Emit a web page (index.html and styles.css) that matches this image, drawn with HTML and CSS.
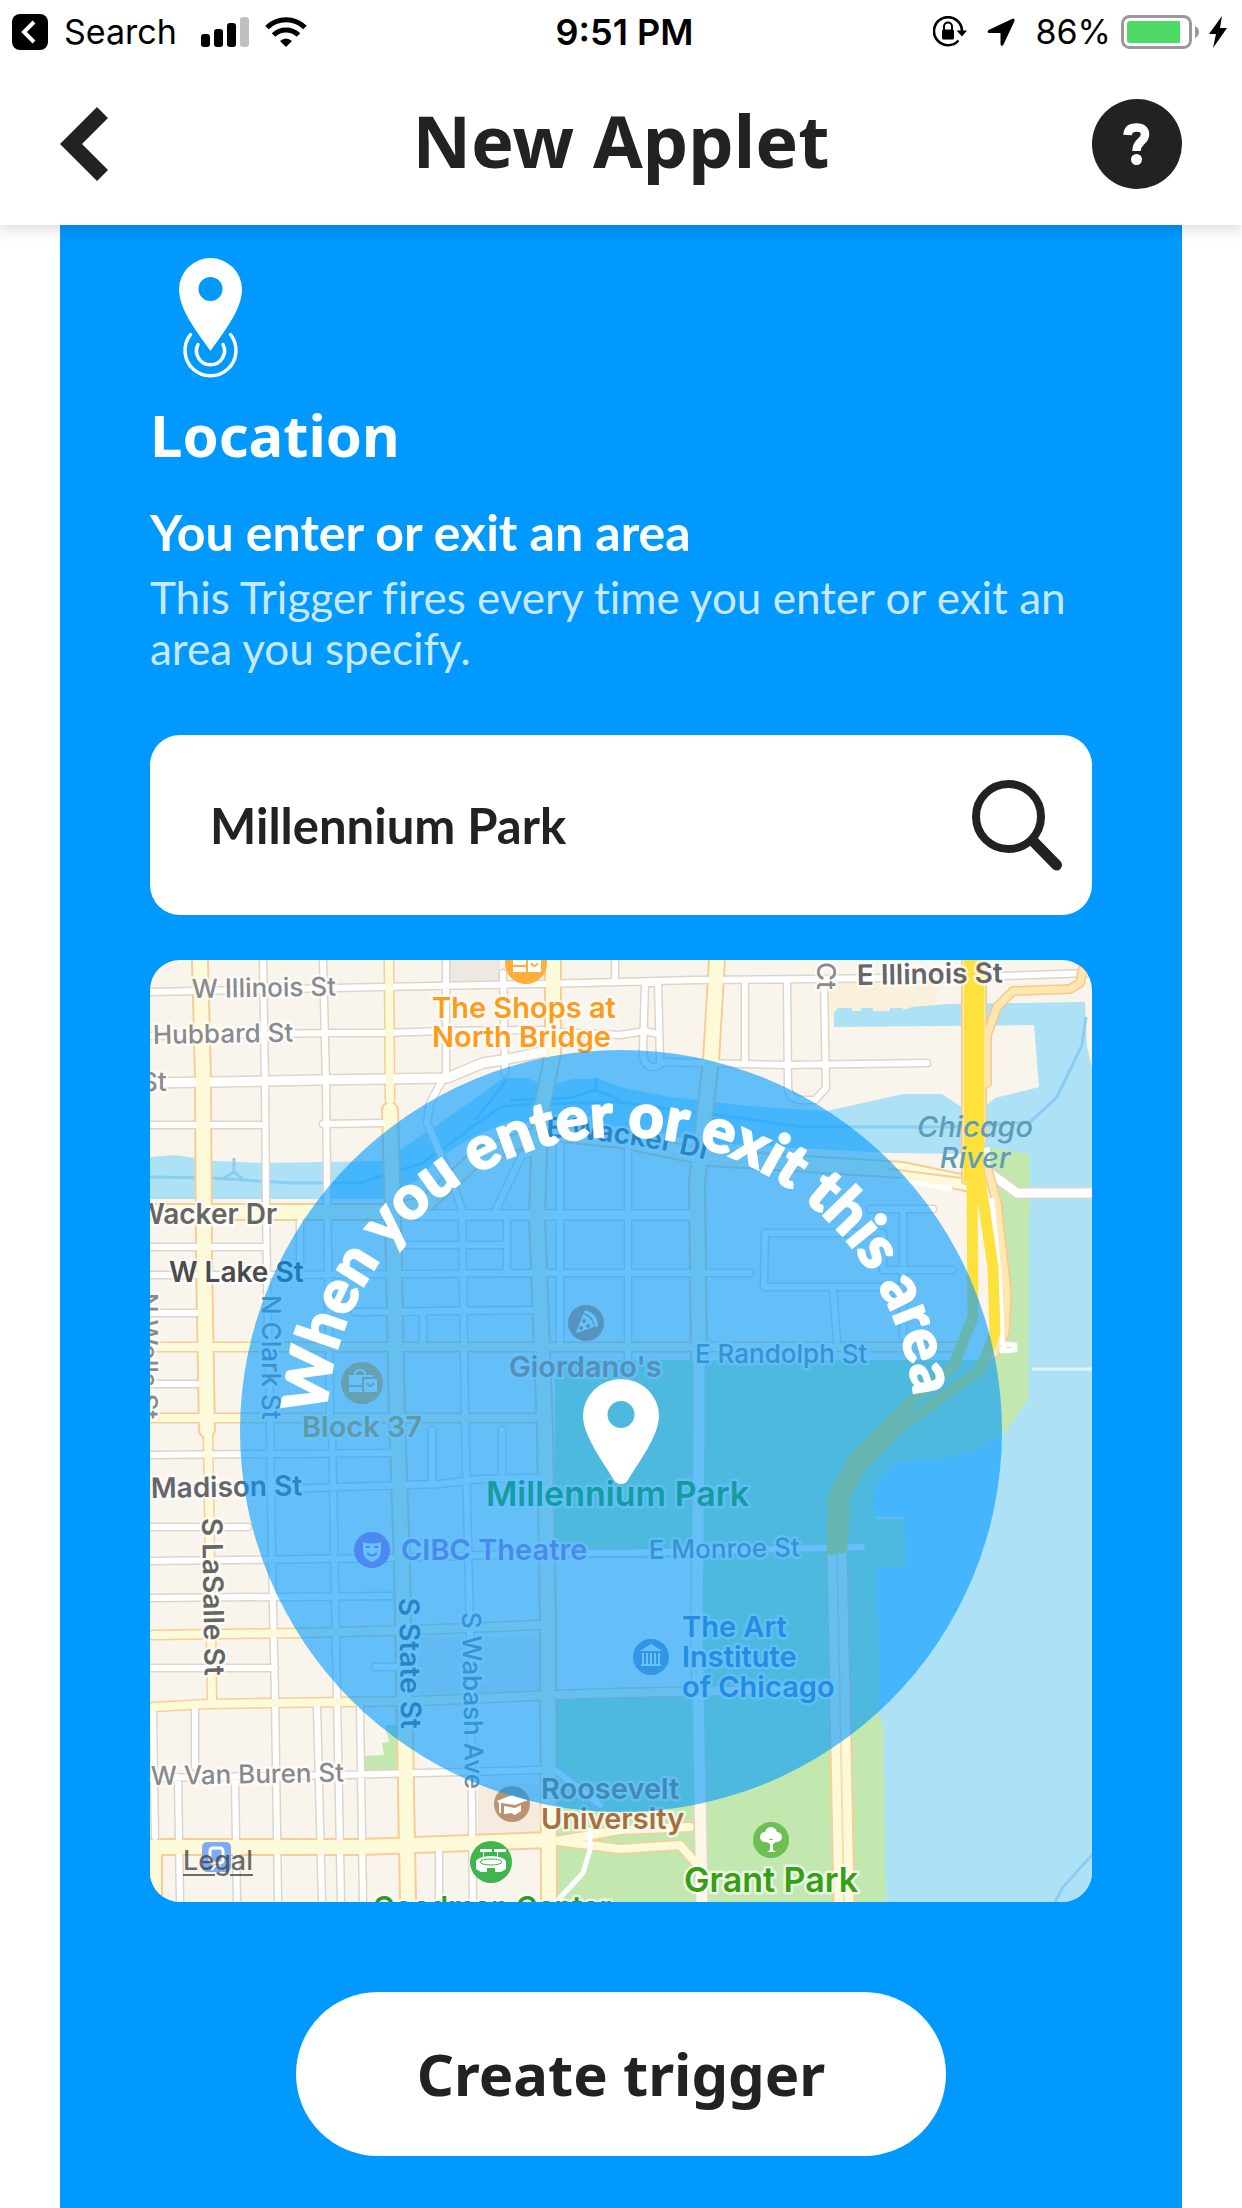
FILE: index.html
```html
<!DOCTYPE html>
<html lang="en">
<head>
<meta charset="utf-8">
<meta name="viewport" content="width=device-width, initial-scale=1">
<title>New Applet</title>
<link rel="stylesheet" href="styles.css">
</head>
<body>
<div class="status">
  <div class="status-left">
    <svg class="icon" width="36" height="36" viewBox="0 0 36 36" aria-hidden="true"><rect width="36" height="36" rx="8"/><path d="M22 8 12 18l10 10" fill="none" stroke="#fff" stroke-width="4"/></svg>
    <span class="status-back">Search</span>
    <svg class="icon" width="48" height="30" viewBox="0 0 48 30" aria-hidden="true"><rect y="17" width="9" height="13" rx="3"/><rect x="13" y="12" width="9" height="18" rx="3"/><rect x="26" y="6" width="9" height="24" rx="3"/><rect x="39" width="9" height="30" rx="3" fill="#bfbfbf"/></svg>
    <svg class="icon" width="42" height="30" viewBox="0 0 42 30" aria-hidden="true"><path d="M15 24q6-5 12 0l-6 6z"/><path d="M2 10.500a27 27 0 0 1 38 0M8.500 18a18 18 0 0 1 25 0" fill="none" stroke="#000" stroke-width="5"/></svg>
  </div>
  <time class="status-time">9:51 PM</time>
  <div class="status-right">
    <svg class="icon" width="34" height="32" viewBox="0 0 34 32" aria-hidden="true"><path d="M25.500 24.500A14 14 0 1 1 29 15" fill="none" stroke="#000" stroke-width="2.600"/><path d="M23.500 14.500h10.500l-5 6z"/><rect x="9" y="13.500" width="12" height="10" rx="1.500"/><path d="M11 14v-3.500a4 4 0 0 1 8 0V14" fill="none" stroke="#000" stroke-width="2"/></svg>
    <svg class="icon" width="28" height="28" viewBox="0 0 28 28" aria-hidden="true"><path d="M26 .5 1.500 12q-2 2.500.5 3h11.500V26q1 3.500 3 .5L27.500 3q.5-2.500-1.500-2.500z"/></svg>
    <div class="status-power">
      <span>86%</span>
      <svg class="icon" width="78" height="34" viewBox="0 0 78 34" aria-hidden="true"><rect x="1.500" y="1.500" width="68" height="31" rx="7" fill="none" stroke="#999" stroke-width="3"/><path d="M6 9q0-3 3-3h50v22H9q-3 0-3-3z" fill="#4cd964"/><path d="M74 11q4 2 4 6t-4 6z" fill="#999"/></svg>
      <svg class="icon" width="18" height="32" viewBox="0 0 18 32" aria-hidden="true"><path d="M13 0 0 18h7L4 32 18 12h-7z"/></svg>
    </div>
  </div>
</div>
<header class="header">
  <button class="back" type="button" aria-label="Back"><svg width="48" height="74" viewBox="0 0 48 74" aria-hidden="true"><path d="M37 0 0 37l37 37 11-11-26-26 26-26z" fill="#222"/></svg></button>
  <h1 class="title">New Applet</h1>
  <button class="help" type="button" aria-label="Help"><svg width="28" height="42" viewBox="0 0 28 42" aria-hidden="true"><path d="M4.500 12Q5 4.500 13.500 4.500 22 4.500 22 11.500q0 3.500-4 7-4.500 4-4.500 9.500" fill="none" stroke="#fff" stroke-width="8.500"/><circle cx="13.500" cy="36.500" r="5.500" fill="#fff"/></svg></button>
</header>
<main class="card">
  <svg class="service" width="63" height="120" viewBox="0 0 63 120" aria-hidden="true"><path fill="#fff" fill-rule="evenodd" d="M31.500 93C22 79 0 53 0 31.500a31.500 31.500 0 0 1 63 0C63 53 41 79 31.500 93zm0-50a12 12 0 1 0 0-24 12 12 0 0 0 0 24z"/><path d="M19 86.500a14 14 0 1 0 25 0M11.500 76.500a25.500 25.500 0 1 0 40 0" fill="none" stroke="#fff" stroke-width="3.500" stroke-linecap="round"/></svg>
  <h2 class="name">Location</h2>
  <h3 class="trigger">You enter or exit an area</h3>
  <p class="about">This Trigger fires every time you enter or exit an area you specify.</p>
  <form class="search">
    <input class="search-input" type="text" aria-label="Search for a place" value="Millennium Park">
    <button class="search-button" type="button" aria-label="Search"><svg width="90" height="91" viewBox="0 0 90 91" aria-hidden="true"><circle cx="36.500" cy="36.500" r="32.500" fill="none" stroke="#222" stroke-width="8"/><path d="M62 62l22.500 23" stroke="#222" stroke-width="11" stroke-linecap="round"/></svg></button>
  </form>
  <div class="map">
    <svg class="map-art" viewBox="0 0 942 942" role="img" aria-label="Map of the area around Millennium Park">
      <defs>
        <path id="streets" d="M0 32 230 27 390 24 470 22 545 20 663 19 820 17 942 13M0 76 177 73 233 73 295 71 393 70M410 72 470 75 495 71 508 74M0 165H110M173 164 235 163M0 287H115M0 315 115 315 390 313 600 313M0 353H48M205 352 395 350M0 424H50M0 495 240 493M0 529 160 528 290 524 330 519 400 518M0 567H98M0 601 240 598 405 593 470 593 712 587M0 638 240 636M0 708H125M225 707H248M0 818 190 815 390 810 405 810 450 845M113 0 115 123 116 240 117 323 120 457 122 600 125 737 128 942M173 0 176 123 177 223 180 457 182 470 187 737 191 942M296 0V113L280 143 277 163 303 223 312 250 315 457 320 670 323 942M353 13 355 113M465 0V22M495 23 493 90Q493 107 503 107T510 100L508 23ZM510 102 637 105 777 103M595 22V100M637 20 638 128Q640 140 652 140L665 140 676 128 674 23M478 190V400M410 185V383M150 262V313M357 260V313M273 352V385M345 252 360 220 372 195 390 190M282 470V520M352 470V517M257 285H357M615 273H733V310H802M615 273 614 327 747 327M753 250V377M720 249H783M683 330 687 380M45 748V807M3 753 5 877M28 817 30 942M85 820 87 942M167 747 172 942M210 747 213 942M289 890V942"/>
        <path id="wide-streets" d="M0 123 170 120 297 118 333 103 353 100 393 92M260 255H540M840 213 867 233H942"/>
        <path id="avenues" d="M0 387H807M0 458H395M58 470 62 740M239 0 240 140M3 675 150 673 267 670 388 665M3 747 57 744 267 741 403 735 470 733 680 729M400 882 470 870 540 867M400 880 470 889 530 885 552 910"/>
        <path id="boulevards" d="M50 0 53 120 54 300 57 470M240 150 243 257 247 457 252 603 258 942M403 0 403 93 390 157 387 257 395 470 398 670 399 942M0 252 235 252 275 245 330 195 395 172 470 180 560 198 753 210 820 224M0 887H210L400 880M567 0 561 100 547 223 549 400M4 890V942"/>
        <path id="columbus" d="M549 400 549 470 547 670 550 837 552 942"/>
        <path id="ramps" d="M933 8 930 23 920 29 863 31 847 47 837 75 837 123M838 210 847 243 857 333 855 373 845 393 810 425 760 460M816 0V220M832 0V180"/>
        <path id="drive" d="M822 215 823 357 803 407 763 440 733 470 703 500 683 537 682 590M830 220 843 307 845 373 830 410 787 440 747 470 710 507 695 537 692 588"/>
        <path id="shore" d="M687 590 694 942"/>
        <path id="wacker-label" d="M396 177Q480 180 570 203"/>
        <path id="arc" d="M176 471A295 295 0 0 1 766 471"/>
      </defs>
      <rect width="942" height="942" fill="#f9f5ed"/>
      <path d="M298 0h52v23h-52z" fill="#eee8e1"/>
      <path d="M678 23h110l-2 24-108 8z" fill="#faf1da"/>
      <path d="M328 823h62v54h-62zM267 677h122v57H267z" fill="#f5ecdf"/>
      <path d="M405 400H840V187h50v263L765 560v382H405zM235 765h13v45h-34v-14l20-1-2-12 7-1z" fill="#c2e8af"/>
      <path d="M405 598H541V730H405z" fill="#f9f5ed"/>
      <path fill="#ade1f6" d="M0 197 25 195 65 201 115 203 235 201 250 190 290 163 333 133 353 118H377L390 123H410L423 119H450L470 127 520 137 597 146 677 151 753 134H792L813 148H833L845 138 889 127 884 65 684 67V53L688 48H702V51H711V48H723V51H740V48H753V50L762 47 798 44 935 42 937 87 942 107V942H736L733 767 729 753V652L726 650V608L756 607 754 558H726L722 542Q724 525 733 515T753 501L787 499 823 492 852 475 857 470 878 440 880 194 837 187 818 194 737 193 560 183 470 167 357 162 323 177 290 197 267 220 233 239H0z"/>
      <path d="M0 217 63 218 140 223H210L273 203 350 147 380 144 470 142 560 154 653 167H803L880 162 907 137 932 85 936 57M84 198V212L74 218M84 212 94 220M447 118 445 130 420 138 360 140M445 130 470 140M357 120 325 160M942 895 913 927 905 942" fill="none" stroke="#8acdf3" stroke-width="3"/>
      <path d="M882 409H942M726 558H754" stroke="#e8f3f6" stroke-width="3"/>
      <g fill="none" stroke-linejoin="round" stroke-linecap="round">
        <use href="#streets" stroke="#ded5ca" stroke-width="9"/>
        <use href="#wide-streets" stroke="#ded5ca" stroke-width="12"/>
        <use href="#columbus" stroke="#ded5ca" stroke-width="14"/>
        <use href="#avenues" stroke="#f7cd98" stroke-width="11"/>
        <use href="#boulevards" stroke="#f7cd98" stroke-width="18"/>
        <use href="#shore" stroke="#f7cd98" stroke-width="23"/>
        <use href="#streets" stroke="#fff" stroke-width="6"/>
        <use href="#wide-streets" stroke="#fff" stroke-width="9"/>
        <use href="#columbus" stroke="#fdf9e6" stroke-width="11"/>
        <use href="#avenues" stroke="#fdfada" stroke-width="8"/>
        <use href="#boulevards" stroke="#fdfada" stroke-width="14"/>
        <use href="#shore" stroke="#fdfada" stroke-width="19"/>
        <use href="#shore" stroke="#f7dfb0" stroke-width="2"/>
        <use href="#ramps" stroke="#f8c68f" stroke-width="10"/>
        <use href="#ramps" stroke="#ffe7ae" stroke-width="7"/>
        <path d="M842 240 850 323 852 383M852 389 856 384 865 385V390L852 391" stroke="#fff" stroke-width="5"/>
        <path d="M740 209 820 219" stroke="#f7cd98" stroke-width="2"/>
        <path d="M753 220 800 229M440 870V890L433 913 408 940" stroke="#fff" stroke-width="5"/>
        <use href="#drive" stroke="#ffe13d" stroke-width="11"/>
        <path d="M824 0V222" stroke="#ffe13d" stroke-width="20" stroke-linecap="butt"/>
      </g>
      <g class="label street">
        <text x="42" y="38" transform="rotate(-1 42 38)">W Illinois St</text>
        <text x="3" y="84" transform="rotate(-1 3 84)">Hubbard St</text>
        <text x="-9" y="131">St</text>
        <text transform="translate(112 335) rotate(90)">N Clark St</text>
        <text transform="translate(-11 333) rotate(90)">N Wells St</text>
        <text transform="translate(667 2) rotate(90)">Ct</text>
        <text x="545" y="403">E Randolph St</text>
        <text x="499" y="599" transform="rotate(-1 499 599)">E Monroe St</text>
        <text transform="translate(312 652) rotate(89)">S Wabash Ave</text>
        <text x="1" y="825" transform="rotate(-1 1 825)">W Van Buren St</text>
      </g>
      <g class="label street strong">
        <text x="127" y="264" text-anchor="end">Wacker Dr</text>
        <text class="dark" x="19" y="322">W Lake St</text>
        <text x="1" y="538" transform="rotate(-1 1 538)">Madison St</text>
        <text transform="translate(52 558) rotate(89)">S LaSalle St</text>
        <text transform="translate(249 638) rotate(89)">S State St</text>
        <text x="707" y="25" transform="rotate(-1 707 25)">E Illinois St</text>
        <text><textPath href="#wacker-label">E Wacker Dr</textPath></text>
      </g>
      <g class="label water">
        <text x="825" y="177">Chicago</text>
        <text x="825" y="208">River</text>
      </g>
      <g class="label poi">
        <text x="282" y="58" fill="#ff9b17">The Shops at</text>
        <text x="282" y="87" fill="#ff9b17">North Bridge</text>
        <text x="152" y="477" fill="#ed9b19">Block 37</text>
        <text x="359" y="417" fill="#d58046">Giordano's</text>
        <text x="251" y="600" fill="#bc70c8">CIBC Theatre</text>
        <text x="532" y="677" fill="#5f78b5">The Art</text>
        <text x="532" y="707" fill="#5f78b5">Institute</text>
        <text x="532" y="737" fill="#5f78b5">of Chicago</text>
        <text x="391" y="839" fill="#a86f3d">Roosevelt</text>
        <text x="391" y="869" fill="#a86f3d">University</text>
        <text x="342" y="957" fill="#2f9a22" text-anchor="middle">Goodman Center</text>
      </g>
      <g class="label park">
        <text x="336" y="546">Millennium Park</text>
        <text x="534" y="932">Grant Park</text>
      </g>
      <g>
        <rect x="52" y="882" width="29" height="30" rx="5" fill="#7eacf0"/>
        <rect x="60" y="888" width="13" height="15" rx="3" fill="none" stroke="#fff" stroke-width="3"/>
        <path d="M62 910l3-4h4l3 4" fill="none" stroke="#fff" stroke-width="2"/>
        <g id="bags" transform="translate(376 3)"><circle r="21" fill="#ffad3b"/><path d="M-13-8H11V9H-13z" fill="#fff"/><path d="M-7-8q0-5 5-5t5 5" fill="none" stroke="#fff" stroke-width="2"/><path d="M-13 3H0" stroke="#ffad3b" stroke-width="2"/><path d="M1-5H16V10H1z" fill="#fff" stroke="#ffad3b" stroke-width="2"/><path d="M5 0q3 6 7 0" fill="none" stroke="#ffad3b" stroke-width="2"/></g>
        <use href="#bags" x="-164" y="420"/>
        <circle cx="436" cy="363" r="18" fill="#d38d5c"/><path d="M435 350q12 3 13 16l-3 1q-2-12-11-14zM433 354q9 3 11 13l-18 6z" fill="#fff"/><circle cx="434" cy="361" r="2" fill="#d38d5c"/><circle cx="431" cy="368" r="2" fill="#d38d5c"/><circle cx="438" cy="366" r="2" fill="#d38d5c"/>
        <circle cx="222" cy="590" r="18" fill="#bc70dc"/><path d="M213 582q9 3 18 0v8q0 9-9 12-9-3-9-12z" fill="#fff"/><path d="M216 587h4m4 0h4m-11 6q5 5 10 0" fill="none" stroke="#bc70dc" stroke-width="2"/>
        <circle cx="501" cy="697" r="18" fill="#7d90c0"/><path d="M490 691l11-7 11 7zm1 13h20v2h-20z" fill="#fff"/><path d="M493 693v11m4-11v11m4-11v11m4-11v11m4-11v11" stroke="#fff" stroke-width="2"/>
        <circle cx="362" cy="844" r="18" fill="#bd926e"/><path d="M347 841l15-6 16 5-13 5-14-2v10h-2v-10z" fill="#fff"/><path d="M354 846l11 2 6-3v6l-6 4-4-2-7 1z" fill="#fff"/>
        <circle cx="341" cy="902" r="21" fill="#3fb54e"/><ellipse cx="341" cy="902" rx="15" ry="6" fill="#fff"/><path d="M326 902h30v7l-5 3h-6v-4h-8v4h-6l-5-3zM330 889h12v3h-12zm14 0h12v3h-12zM333 892h1v5h-1zm14 0h1v5h-1z" fill="#fff"/><ellipse cx="341" cy="902" rx="11" ry="3" fill="none" stroke="#3fb54e" stroke-width="1"/>
        <circle cx="621" cy="880" r="18" fill="#6cc053"/><circle cx="621" cy="873" r="6" fill="#fff"/><circle cx="615" cy="877" r="5" fill="#fff"/><circle cx="627" cy="877" r="5" fill="#fff"/><path d="M613 880h16l-6 4v6l3 2h-9l3-2v-6z" fill="#fff"/>
      </g>
      <circle cx="471" cy="471" r="381" fill="#09f" fill-opacity=".6"/>
      <path fill="#fff" fill-rule="evenodd" d="M464 520C454 503 433 476 433 456a38 37 0 0 1 76 0C509 476 488 503 478 520q-2 4-7 4t-7-4zM471 468a13.500 13.500 0 1 0 0-27 13.500 13.500 0 0 0 0 27z"/>
      <text class="arc-text"><textPath href="#arc" startOffset="49%">When you enter or exit this area</textPath></text>
    </svg>
    <a class="legal" href="#legal">Legal</a>
  </div>
  <button class="create" type="button">Create trigger</button>
</main>
</body>
</html>
```
FILE: styles.css
```css
* {
  box-sizing: border-box;
}

body {
  margin: 0;
  min-height: 100vh;
  display: flex;
  flex-direction: column;
  background: #fff;
  color: #222;
  font-family: Lato, "Open Sans", sans-serif;
  font-variant-ligatures: none;
}

h1,
h2,
h3,
p {
  margin: 0;
}

button {
  margin: 0;
  padding: 0;
  border: 0;
  background: none;
  color: inherit;
  font: inherit;
}

svg {
  display: block;
}

.status {
  display: grid;
  grid-template-columns: 1fr auto 1fr;
  align-items: center;
  height: 63px;
  padding: 0 15px 0 12px;
  color: #000;
  font: 400 34px/40px Inter, sans-serif;
}

.icon {
  flex: none;
}

.status-left,
.status-right,
.status-power {
  display: flex;
  align-items: center;
}

.status-left {
  gap: 16px;
}

.status-back {
  margin-right: 8px;
}

.status-time {
  padding-left: 10px;
  font-size: 36px;
  font-weight: 600;
}

.status-right {
  justify-content: flex-end;
  gap: 20px;
}

.status-power {
  gap: 10px;
}

.header {
  position: relative;
  z-index: 1;
  display: flex;
  align-items: center;
  justify-content: space-between;
  height: 162px;
  padding: 0 60px;
  background: #fff;
  box-shadow: 0 4px 14px rgba(0, 0, 0, 0.15);
  clip-path: inset(0 0 -24px 0);
}

.back {
  width: 90px;
  height: 90px;
}

.title,
.name,
.create {
  font-family: "Noto Sans", "Open Sans", sans-serif;
  font-weight: 700;
}

.title {
  padding-bottom: 8px;
  font-size: 72px;
  line-height: 90px;
}

.help {
  display: grid;
  place-items: center;
  width: 90px;
  height: 90px;
  border-radius: 50%;
  background: #222;
}

.card {
  flex: 1;
  display: flex;
  flex-direction: column;
  margin: 0 60px;
  padding: 33px 90px 52px;
  background: #09f;
  color: #fff;
}

.service {
  margin-left: 29px;
}

.name {
  margin-top: 20px;
  font-size: 58px;
  line-height: 74px;
}

.trigger {
  margin-top: 30px;
  font-size: 50px;
  font-weight: 700;
  line-height: 60px;
}

.about {
  margin-top: 10px;
  font-size: 44px;
  line-height: 51px;
  color: rgba(255, 255, 255, 0.8);
}

.search {
  display: flex;
  align-items: center;
  height: 180px;
  margin-top: 61px;
  padding: 0 30px 0 60px;
  border-radius: 30px;
  background: #fff;
}

.search-input {
  flex: 1;
  min-width: 0;
  padding: 0;
  border: 0;
  background: none;
  color: #222;
  font: 700 49px/60px Lato, "Open Sans", sans-serif;
}

.map {
  position: relative;
  margin-top: 45px;
  border-radius: 30px;
  overflow: hidden;
}

.map-art {
  width: 100%;
  height: auto;
}

.label {
  font-family: Inter, sans-serif;
  paint-order: stroke;
  stroke: rgba(255, 255, 255, 0.7);
  stroke-width: 5px;
  stroke-linejoin: round;
}

.street {
  font-size: 26px;
  font-weight: 500;
  fill: #8a8a8a;
}

.strong {
  font-size: 28px;
  font-weight: 600;
  fill: #666;
}

.dark {
  fill: #4b4b4b;
}

.water {
  font-size: 29px;
  font-style: italic;
  font-weight: 500;
  text-anchor: middle;
  fill: #5e9db8;
  stroke: none;
}

.poi {
  font-size: 29px;
  font-weight: 600;
}

.park {
  font-size: 34px;
  font-weight: 600;
  fill: #35a012;
}

.arc-text {
  font-size: 61px;
  font-weight: 900;
  text-anchor: middle;
  fill: #fff;
  stroke: #fff;
  stroke-width: 2px;
}

.legal {
  position: absolute;
  left: 33px;
  bottom: 25px;
  color: rgba(60, 60, 60, 0.75);
  font: 500 27px/32px Inter, sans-serif;
  text-underline-offset: 4px;
}

.create {
  align-self: center;
  width: 69%;
  height: 164px;
  margin-top: 90px;
  border-radius: 82px;
  background: #fff;
  color: #222;
  font-size: 58px;
  line-height: 74px;
}
```
